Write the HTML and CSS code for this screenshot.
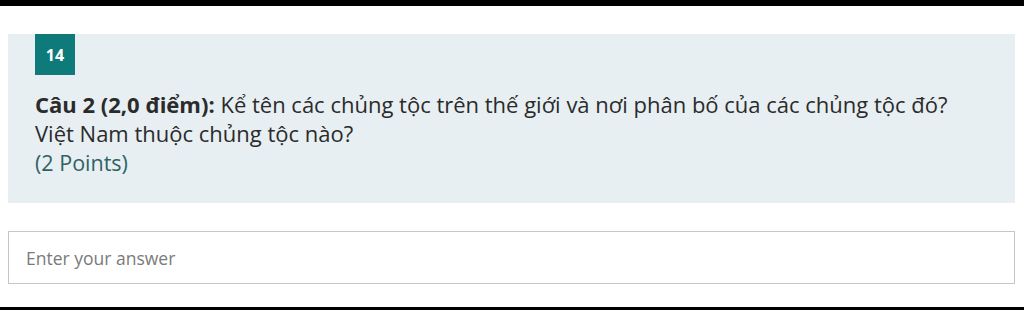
FILE: index.html
```html
<!DOCTYPE html>
<html lang="en">
<head>
  <meta charset="UTF-8">
  <title>Question 14</title>
  <link rel="stylesheet" href="styles.css">
</head>
<body>
  <div class="bar bar-top"></div>
  <div class="page">
    <div class="question">
      <div class="number">14</div>
      <div class="title">
        <strong>Câu 2 (2,0 điểm):</strong> Kể tên các chủng tộc trên thế giới và nơi phân bố của các chủng tộc đó?<br>
        Việt Nam thuộc chủng tộc nào?
      </div>
      <div class="points">(2 Points)</div>
    </div>
    <div class="answer">Enter your answer</div>
  </div>
  <div class="bar bar-bottom"></div>
</body>
</html>
```

FILE: styles.css
```css
html {
  box-sizing: border-box;
}

*, *:before, *:after {
  box-sizing: inherit;
}

body {
  margin: 0;
  height: 310px;
  overflow: hidden;
  background: #fff;
  font-family: "Open Sans", "Noto Sans", sans-serif;
  color: #2b2b2b;
  display: flex;
  flex-direction: column;
}

.bar {
  background: #000;
}

.bar-top {
  height: 6px;
}

.bar-bottom {
  height: 3px;
  margin-top: auto;
}

.page {
  padding: 28px 9px 0 8px;
  display: flex;
  flex-direction: column;
  gap: 28px;
}

.question {
  height: 169px;
  background: #e8eff2;
  padding: 0 27px;
}

.number {
  width: 40px;
  height: 41px;
  background: #0f7a7a;
  color: #fff;
  font-weight: 700;
  font-size: 16px;
  display: flex;
  align-items: center;
  justify-content: center;
}

.title {
  margin-top: 15px;
  font-size: 22px;
  line-height: 29px;
}

.title strong {
  font-weight: 700;
}

.points {
  font-size: 21.5px;
  line-height: 29px;
  color: #2f6363;
}

.answer {
  height: 53px;
  border: 1px solid #c6c6c6;
  padding: 0 17px;
  display: flex;
  align-items: center;
  font-size: 17.5px;
  color: #7a7a7a;
}
```
